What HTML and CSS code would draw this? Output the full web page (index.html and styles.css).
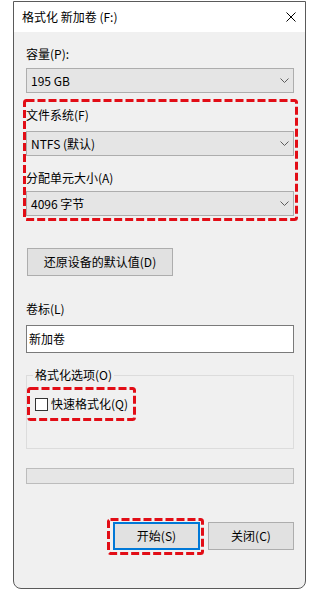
FILE: index.html
```html
<!DOCTYPE html>
<html lang="zh-CN">
<head>
<meta charset="utf-8">
<title>格式化 新加卷 (F:)</title>
<link rel="stylesheet" href="styles.css">
</head>
<body>
<div class="window">
  <div class="titlebar">
    <span class="title">格式化 新加卷 (F:)</span>
    <svg class="close" width="10" height="10" viewBox="0 0 10 10"><path d="M0.5 0.5 L9.5 9.5 M9.5 0.5 L0.5 9.5" stroke="#000" stroke-width="1" fill="none"/></svg>
  </div>
  <div class="content">
    <div class="label label-first">容量(P):</div>
    <div class="combo"><span>195 GB</span><svg class="chev" width="9" height="5" viewBox="0 0 9 5"><path d="M0.5 0.5 L4.5 4.5 L8.5 0.5" stroke="#5c5c5c" stroke-width="1" fill="none"/></svg></div>
    <div class="mark mark-fs">
      <svg class="dash"><rect x="1.5" y="1.5" rx="2"/></svg>
      <div class="label label-fs">文件系统(F)</div>
      <div class="combo combo-fs"><span>NTFS (默认)</span><svg class="chev" width="9" height="5" viewBox="0 0 9 5"><path d="M0.5 0.5 L4.5 4.5 L8.5 0.5" stroke="#5c5c5c" stroke-width="1" fill="none"/></svg></div>
      <div class="label label-unit">分配单元大小(A)</div>
      <div class="combo combo-unit"><span>4096 字节</span><svg class="chev" width="9" height="5" viewBox="0 0 9 5"><path d="M0.5 0.5 L4.5 4.5 L8.5 0.5" stroke="#5c5c5c" stroke-width="1" fill="none"/></svg></div>
    </div>
    <button class="btn btn-restore">还原设备的默认值(D)</button>
    <div class="label label-vol">卷标(L)</div>
    <div class="textbox">新加卷</div>
    <fieldset class="group">
      <legend class="legend">格式化选项(O)</legend>
      <div class="mark mark-quick">
        <svg class="dash"><rect x="1.5" y="1.5" rx="2"/></svg>
        <span class="checkbox"></span>
        <span class="check-text">快速格式化(Q)</span>
      </div>
    </fieldset>
    <div class="progress"></div>
    <div class="actions">
      <div class="mark mark-start">
        <svg class="dash"><rect x="1.5" y="1.5" rx="2"/></svg>
        <button class="btn btn-primary">开始(S)</button>
      </div>
      <button class="btn btn-close">关闭(C)</button>
    </div>
  </div>
</div>
</body>
</html>
```
FILE: styles.css
```css
* { box-sizing: border-box; }
html, body { margin: 0; padding: 0; background: #ffffff; }
body {
  font-family: "Noto Sans CJK SC", "Noto Sans", sans-serif;
  font-size: 12px;
  color: #000;
}
.window {
  margin: 1px 0 0 13px;
  width: 293px;
  height: 588px;
  border: 1px solid #5a5a5a;
  border-radius: 0 0 8px 8px;
  background: #f0f0f0;
  overflow: hidden;
}
.titlebar {
  height: 30px;
  background: #ffffff;
  display: flex;
  align-items: center;
  justify-content: space-between;
  padding: 0 9px 0 8px;
}
.title { line-height: 16px; }
.close { display: block; margin-top: -1px; }
.content {
  padding: 0 11px 0 12px;
  display: flex;
  flex-direction: column;
  align-items: stretch;
}
.label { line-height: 16px; height: 16px; white-space: nowrap; }
.label-first { margin-top: 14px; }
.combo {
  margin-top: 6px;
  height: 25px;
  border: 1px solid #adadad;
  background: #e5e5e5;
  display: flex;
  align-items: center;
  justify-content: space-between;
  padding: 0 4px 0 4px;
  line-height: 16px;
}
.chev { display: block; }
.mark {
  position: relative;
  border: 3px solid transparent;
}
.dash {
  position: absolute;
  left: -3px;
  top: -3px;
  width: calc(100% + 6px);
  height: calc(100% + 6px);
  overflow: visible;
  pointer-events: none;
}
.dash rect {
  width: calc(100% - 3px);
  height: calc(100% - 3px);
  fill: none;
  stroke: #e20d16;
  stroke-width: 3;
  stroke-dasharray: 8 3;
}
.mark-fs {
  margin: 6px -4px 0 -3px;
  padding: 5px 1px 2px 0;
  display: flex;
  flex-direction: column;
}
.label-fs { margin-top: 0; }
.combo-fs { margin-top: 8px; }
.label-unit { margin-top: 14px; }
.combo-unit { margin-top: 5px; }
.btn {
  font-family: inherit;
  font-size: 12px;
  color: #000;
  background: #e1e1e1;
  border: 1px solid #adadad;
  height: 28px;
  padding: 0;
  margin: 0;
  line-height: 16px;
}
.btn-restore {
  margin-top: 27px;
  margin-left: 1px;
  width: 146px;
  align-self: flex-start;
}
.label-vol { margin-top: 25px; }
.textbox {
  margin-top: 8px;
  height: 28px;
  border: 1px solid #7a7a7a;
  background: #ffffff;
  padding: 0 2px;
  line-height: 26px;
}
.group {
  margin: 14px 0 0 0;
  padding: 0;
  height: 82px;
  border: 1px solid #dcdcdc;
  min-width: 0;
}
.legend {
  margin-left: 6px;
  padding: 0 2px;
  line-height: 16px;
}
.mark-quick {
  margin-top: 4px;
  width: 109px;
  height: 34px;
  display: flex;
  align-items: center;
  padding-left: 5px;
  gap: 3px;
}
.checkbox {
  display: block;
  width: 13px;
  height: 13px;
  border: 1px solid #333333;
  background: #ffffff;
}
.check-text { line-height: 16px; white-space: nowrap; }
.progress {
  margin-top: 19px;
  height: 16px;
  border: 1px solid #bcbcbc;
  background: #e6e6e6;
}
.actions {
  margin-top: 34px;
  display: flex;
  justify-content: flex-end;
  align-items: flex-start;
  gap: 4px;
}
.mark-start { padding: 1px 1px 2px 3px; }
.btn-primary {
  display: block;
  width: 87px;
  border: 2px solid #0078d7;
}
.btn-close {
  margin-top: 4px;
  width: 86px;
}
```
